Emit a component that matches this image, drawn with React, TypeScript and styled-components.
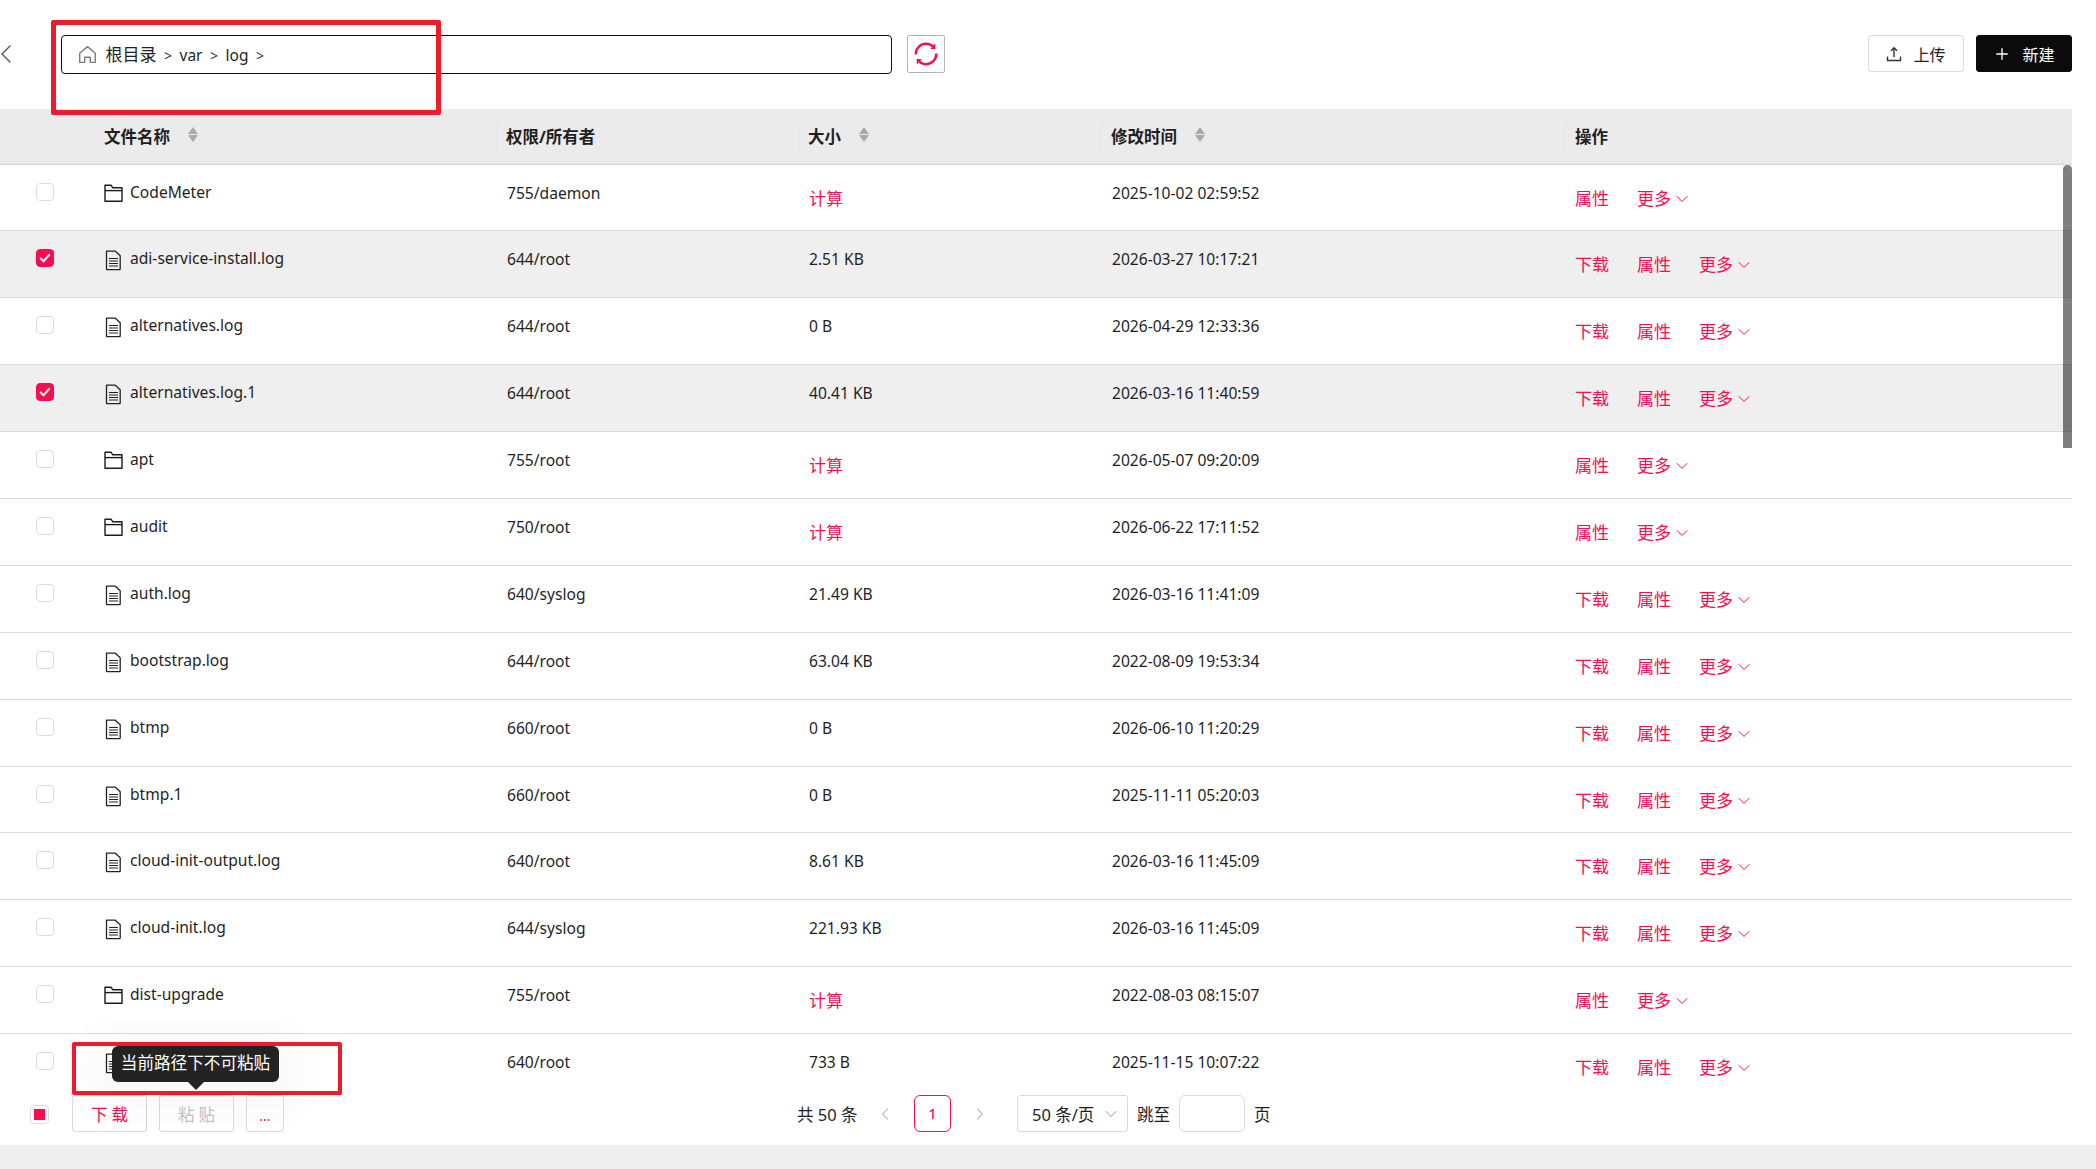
import React from 'react';
import styled, { createGlobalStyle } from 'styled-components';
import { ChevronDown, ChevronLeft, ChevronRight, Plus } from 'lucide-react';

const RED = '#fb0c50';
const COLUMNS = '104px 402px 302px 303px 464px 1fr';

const GlobalStyle = createGlobalStyle`
  html, body { margin: 0; padding: 0; background: #fff; }
  body { font-family: "Noto Sans", "Noto Sans CJK SC", sans-serif; color: #1f1f1f; }
  * { box-sizing: border-box; }
`;

const Page = styled.div`
  position: relative;
  width: 2096px;
  height: 1169px;
  overflow: hidden;
  display: flex;
  flex-direction: column;
`;

const Main = styled.div`
  width: 2072px;
  height: 1145px;
  display: flex;
  flex-direction: column;
`;

const BottomStrip = styled.div`
  height: 24px;
  background: #efefef;
`;

const Toolbar = styled.div`
  height: 109px;
  flex-shrink: 0;
  display: flex;
  align-items: flex-start;
  padding-top: 35px;
`;

const BackButton = styled.div`
  width: 71px;
  height: 38px;
  display: flex;
  align-items: center;
  margin-left: -10px;
  color: #555;
`;

const PathBar = styled.div`
  width: 831px;
  height: 39px;
  border: 1px solid #111;
  border-radius: 4px;
  display: flex;
  align-items: center;
  padding-left: 16px;
  font-size: 15.5px;
  gap: 7.5px;
`;

const Crumb = styled.span<{ $root?: boolean }>`
  line-height: 20px;
  margin-top: 1px;
  ${(p) => p.$root && 'font-size: 17px; margin-left: 1px;'}
`;

const CrumbSep = styled.span`
  font-size: 14px;
  color: #333;
  margin-top: 1px;
`;

const RefreshButton = styled.div`
  width: 38px;
  height: 38px;
  margin-left: 15px;
  border: 1px solid #b5b5b5;
  border-radius: 2px;
  display: flex;
  align-items: center;
  justify-content: center;
`;

const ToolbarActions = styled.div`
  margin-left: auto;
  display: flex;
  gap: 12px;
`;

const ActionButton = styled.div<{ $dark?: boolean }>`
  width: 96px;
  height: 37px;
  border-radius: 3px;
  display: flex;
  align-items: center;
  justify-content: center;
  gap: 11px;
  font-size: 16px;
  border: 1px solid ${(p) => (p.$dark ? '#0b0b0b' : '#dcdcdc')};
  background: ${(p) => (p.$dark ? '#0b0b0b' : '#fff')};
  color: ${(p) => (p.$dark ? '#fff' : '#222')};
`;

const HeaderRow = styled.div`
  height: 55.5px;
  flex-shrink: 0;
  display: grid;
  grid-template-columns: ${COLUMNS};
  align-items: center;
  background: #ebebeb;
  border-bottom: 1px solid #d6d6d6;
`;

const HeaderCell = styled.div<{ $divider?: boolean }>`
  position: relative;
  height: 100%;
  display: flex;
  align-items: center;
  font-size: 16.5px;
  font-weight: 700;
  ${(p) =>
    p.$divider &&
    `&::before {
      content: '';
      position: absolute;
      left: -10px;
      top: 12px;
      bottom: 12px;
      width: 1px;
      background: #e6e6e6;
    }`}
`;

const SortMark = styled.span`
  display: inline-flex;
  flex-direction: column;
  gap: 1px;
  margin-left: 18px;
  margin-top: -3px;
`;

const SortArrow = styled.i<{ $down?: boolean }>`
  display: block;
  width: 0;
  height: 0;
  border-left: 5px solid transparent;
  border-right: 5px solid transparent;
  ${(p) =>
    p.$down ? 'border-top: 7px solid #aaa;' : 'border-bottom: 7px solid #aaa;'}
`;

const TableBody = styled.div`
  position: relative;
  flex: 1;
  min-height: 0;
  overflow: hidden;
`;

const Row = styled.div<{ $selected?: boolean }>`
  height: 66.9px;
  display: grid;
  grid-template-columns: ${COLUMNS};
  background: ${(p) => (p.$selected ? '#efefef' : '#fff')};
  border-bottom: 1px solid #dadada;
  font-size: 15.6px;
`;

const CheckCell = styled.div`
  padding: 18px 0 0 36px;
`;

const CheckBox = styled.div<{ $checked?: boolean }>`
  width: 18px;
  height: 18px;
  border-radius: 4px;
  border: 1px solid ${(p) => (p.$checked ? RED : '#dcdcdc')};
  background: ${(p) => (p.$checked ? RED : '#fff')};
  display: flex;
  align-items: center;
  justify-content: center;
`;

const NameCell = styled.div`
  display: flex;
  align-items: flex-start;
  padding-top: 17px;
  gap: 7px;
  line-height: 20px;
`;

const NameIcon = styled.span`
  width: 19px;
  height: 22px;
  flex-shrink: 0;
  display: block;
  margin-top: 1px;
`;

const TextCell = styled.div`
  padding: 18px 0 0 1px;
  line-height: 20px;
`;

const RedCell = styled.div`
  padding: 23px 0 0 1px;
  line-height: 22px;
  font-size: 17px;
  color: ${RED};
`;

const OpsCell = styled.div`
  padding-top: 23px;
  display: flex;
  align-items: flex-start;
  gap: 28px;
  line-height: 22px;
  font-size: 17px;
  color: ${RED};
`;

const MoreLink = styled.span`
  display: inline-flex;
  align-items: center;
  gap: 1px;
`;

const Scrollbar = styled.div`
  position: absolute;
  right: 0;
  top: 0;
  width: 9px;
  height: 283px;
  border-radius: 5px 5px 0 0;
  background: rgba(0, 0, 0, 0.5);
`;

const Footer = styled.div`
  height: 53px;
  flex-shrink: 0;
  display: flex;
  align-items: flex-start;
  padding: 3px 0 0 30px;
  background: #fff;
`;

const FooterCheck = styled.div`
  width: 19px;
  height: 19px;
  margin-top: 10px;
  margin-right: 23px;
  border: 1px solid #dcdcdc;
  border-radius: 4px;
  display: flex;
  align-items: center;
  justify-content: center;
`;

const FooterCheckMark = styled.span`
  width: 11px;
  height: 11px;
  background: ${RED};
`;

const BulkButton = styled.div<{ $muted?: boolean }>`
  width: 75px;
  height: 37px;
  margin-right: 12px;
  border: 1px solid #dadada;
  border-radius: 3px;
  display: flex;
  align-items: center;
  justify-content: center;
  font-size: 16.5px;
  letter-spacing: 4px;
  padding-left: 4px;
  color: ${(p) => (p.$muted ? '#c4c4c4' : RED)};
`;

const MoreButton = styled.div`
  width: 38px;
  height: 37px;
  border: 1px solid #dadada;
  border-radius: 3px;
  display: flex;
  align-items: center;
  justify-content: center;
  font-size: 14px;
  line-height: 14px;
  padding-top: 4px;
  color: ${RED};
`;

const Pager = styled.div`
  margin-left: 513px;
  height: 37px;
  display: flex;
  align-items: center;
  font-size: 16.5px;
`;

const PagerArrow = styled.span`
  display: flex;
  width: 20px;
  justify-content: center;
  color: #c4c4c4;
`;

const PageNumber = styled.div`
  width: 37px;
  height: 37px;
  margin: 0 19px;
  border: 1px solid ${RED};
  border-radius: 6px;
  color: ${RED};
  font-weight: 500;
  font-size: 14px;
  display: flex;
  align-items: center;
  justify-content: center;
`;

const TotalText = styled.span`
  width: 78px;
`;

const SizeSelect = styled.div`
  width: 111px;
  height: 37px;
  margin-left: 27px;
  border: 1px solid #dadada;
  border-radius: 3px;
  display: flex;
  align-items: center;
  justify-content: space-between;
  padding: 0 6px 0 14px;
  white-space: nowrap;
`;

const JumpLabel = styled.span`
  margin: 0 9px;
`;

const JumpInput = styled.div`
  width: 66px;
  height: 37px;
  border: 1px solid #dadada;
  border-radius: 6px;
`;

const Tooltip = styled.div`
  position: absolute;
  left: 112px;
  top: 1046px;
  width: 167px;
  height: 36px;
  border-radius: 6px;
  background: #232323;
  color: #fff;
  font-size: 16.6px;
  line-height: 34px;
  text-align: center;
  white-space: nowrap;
  box-shadow: 0 8px 34px 26px rgba(0, 0, 0, 0.022);

  &::after {
    content: '';
    position: absolute;
    left: 76px;
    top: 36px;
    border-left: 8px solid transparent;
    border-right: 8px solid transparent;
    border-top: 8px solid #232323;
  }
`;

const Annotation = styled.div<{ $x: number; $y: number; $w: number; $h: number; $line: number }>`
  position: absolute;
  left: ${(p) => p.$x}px;
  top: ${(p) => p.$y}px;
  width: ${(p) => p.$w}px;
  height: ${(p) => p.$h}px;
  border: ${(p) => p.$line}px solid #ee1c2b;
  border-radius: 2px;
  pointer-events: none;
`;

const FolderIcon = () => (
  <svg width="19" height="20" viewBox="0 0 19 20" fill="none" stroke="#1c1c1c" strokeWidth="1.4" style={{ display: 'block' }}>
    <path d="M1 18.3V2.2h6l1.8 2.6H18v13.5z" strokeLinejoin="round" />
    <path d="M1 7.6h17" />
  </svg>
);

const FileIcon = () => (
  <svg width="19" height="22" viewBox="0 0 19 22" fill="none" stroke="#222" strokeWidth="1.3" style={{ display: 'block' }}>
    <path d="M2.5 2.2h8.8l4.9 4.6v13.2c0 .4-.3.7-.7.7H3.2c-.4 0-.7-.3-.7-.7z" strokeLinejoin="round" />
    <path d="M5 9.5h9M5 12h9M5 14.5h9M5 17h9" strokeWidth="1.2" />
  </svg>
);

const HomeIcon = () => (
  <svg width="19" height="19" viewBox="0 0 19 19" fill="none" stroke="#7d7d7d" strokeWidth="1.4" style={{ display: 'block' }}>
    <path d="M1.7 8.2 9.5 1.6l7.8 6.6v9.2h-5v-5.2H6.7v5.2h-5z" strokeLinejoin="round" />
  </svg>
);

const RefreshIcon = () => (
  <svg width="26" height="26" viewBox="0 0 26 26" fill="none" stroke={RED} strokeWidth="2.4" strokeLinecap="round">
    <path d="M2.800 12.500C3 7 7.500 2.800 13 2.800c3.400 0 6.300 1.600 8.200 4.100" />
    <path d="M23.200 13.500c-.2 5.500-4.700 9.700-10.200 9.700-3.400 0-6.300-1.600-8.200-4.100" />
    <path d="M21.500 3.800v3.400h-3.200M4.500 22.200v-3.400h3.200" strokeWidth="1.500" />
  </svg>
);

const UploadIcon = () => (
  <svg width="16" height="16" viewBox="0 0 16 16" fill="none" stroke="#333" strokeWidth="1.4">
    <path d="M8 11V2M5 4.800 8 1.800l3 3M1.500 10.500v4h13v-4" />
  </svg>
);

const CheckMark = () => (
  <svg width="12" height="10" viewBox="0 0 12 10" fill="none" stroke="#fff" strokeWidth="2">
    <path d="M1.200 5 4.500 8.200l6.200-6.800" />
  </svg>
);

type FileRow = {
  name: string;
  perm: string;
  size: string | null;
  time: string;
  checked?: boolean;
};

// the last row's name sits behind the tooltip, so it stays empty
const rows: FileRow[] = [
  { name: 'CodeMeter', perm: '755/daemon', size: null, time: '2025-10-02 02:59:52' },
  { name: 'adi-service-install.log', perm: '644/root', size: '2.51 KB', time: '2026-03-27 10:17:21', checked: true },
  { name: 'alternatives.log', perm: '644/root', size: '0 B', time: '2026-04-29 12:33:36' },
  { name: 'alternatives.log.1', perm: '644/root', size: '40.41 KB', time: '2026-03-16 11:40:59', checked: true },
  { name: 'apt', perm: '755/root', size: null, time: '2026-05-07 09:20:09' },
  { name: 'audit', perm: '750/root', size: null, time: '2026-06-22 17:11:52' },
  { name: 'auth.log', perm: '640/syslog', size: '21.49 KB', time: '2026-03-16 11:41:09' },
  { name: 'bootstrap.log', perm: '644/root', size: '63.04 KB', time: '2022-08-09 19:53:34' },
  { name: 'btmp', perm: '660/root', size: '0 B', time: '2026-06-10 11:20:29' },
  { name: 'btmp.1', perm: '660/root', size: '0 B', time: '2025-11-11 05:20:03' },
  { name: 'cloud-init-output.log', perm: '640/root', size: '8.61 KB', time: '2026-03-16 11:45:09' },
  { name: 'cloud-init.log', perm: '644/syslog', size: '221.93 KB', time: '2026-03-16 11:45:09' },
  { name: 'dist-upgrade', perm: '755/root', size: null, time: '2022-08-03 08:15:07' },
  { name: '', perm: '640/root', size: '733 B', time: '2025-11-15 10:07:22' },
];

const SortIcon = () => (
  <SortMark>
    <SortArrow />
    <SortArrow $down />
  </SortMark>
);

const App: React.FC = () => {
  return (
    <Page>
      <GlobalStyle />
      <Main>
        <Toolbar>
          <BackButton>
            <ChevronLeft size={32} strokeWidth={1} />
          </BackButton>
          <PathBar>
            <HomeIcon />
            <Crumb $root>根目录</Crumb>
            <CrumbSep>&gt;</CrumbSep>
            <Crumb>var</Crumb>
            <CrumbSep>&gt;</CrumbSep>
            <Crumb>log</Crumb>
            <CrumbSep>&gt;</CrumbSep>
          </PathBar>
          <RefreshButton>
            <RefreshIcon />
          </RefreshButton>
          <ToolbarActions>
            <ActionButton>
              <UploadIcon />
              上传
            </ActionButton>
            <ActionButton $dark>
              <Plus size={18} strokeWidth={1.8} />
              新建
            </ActionButton>
          </ToolbarActions>
        </Toolbar>

        <HeaderRow>
          <span />
          <HeaderCell>
            文件名称
            <SortIcon />
          </HeaderCell>
          <HeaderCell $divider>权限/所有者</HeaderCell>
          <HeaderCell $divider>
            大小
            <SortIcon />
          </HeaderCell>
          <HeaderCell $divider>
            修改时间
            <SortIcon />
          </HeaderCell>
          <HeaderCell $divider>操作</HeaderCell>
        </HeaderRow>

        <TableBody>
          {rows.map((row) => (
            <Row key={row.time + row.perm} $selected={row.checked}>
              <CheckCell>
                <CheckBox $checked={row.checked}>{row.checked && <CheckMark />}</CheckBox>
              </CheckCell>
              <NameCell>
                <NameIcon>{row.size === null ? <FolderIcon /> : <FileIcon />}</NameIcon>
                {row.name}
              </NameCell>
              <TextCell>{row.perm}</TextCell>
              {row.size === null ? <RedCell>计算</RedCell> : <TextCell>{row.size}</TextCell>}
              <TextCell>{row.time}</TextCell>
              <OpsCell>
                {row.size !== null && <span>下载</span>}
                <span>属性</span>
                <MoreLink>
                  更多
                  <ChevronDown size={20} strokeWidth={1.2} />
                </MoreLink>
              </OpsCell>
            </Row>
          ))}
          <Scrollbar />
        </TableBody>

        <Footer>
          <FooterCheck>
            <FooterCheckMark />
          </FooterCheck>
          <BulkButton>下载</BulkButton>
          <BulkButton $muted>粘贴</BulkButton>
          <MoreButton>...</MoreButton>
          <Pager>
            <TotalText>共 50 条</TotalText>
            <PagerArrow>
              <ChevronLeft size={20} strokeWidth={1.5} />
            </PagerArrow>
            <PageNumber>1</PageNumber>
            <PagerArrow>
              <ChevronRight size={20} strokeWidth={1.5} />
            </PagerArrow>
            <SizeSelect>
              50 条/页
              <PagerArrow>
                <ChevronDown size={22} strokeWidth={1.4} />
              </PagerArrow>
            </SizeSelect>
            <JumpLabel>跳至</JumpLabel>
            <JumpInput />
            <JumpLabel>页</JumpLabel>
          </Pager>
        </Footer>
      </Main>
      <BottomStrip />

      <Tooltip>当前路径下不可粘贴</Tooltip>
      <Annotation $x={51} $y={20} $w={390} $h={95} $line={5} />
      <Annotation $x={72} $y={1042} $w={270} $h={53} $line={4} />
    </Page>
  );
};

export default App;
